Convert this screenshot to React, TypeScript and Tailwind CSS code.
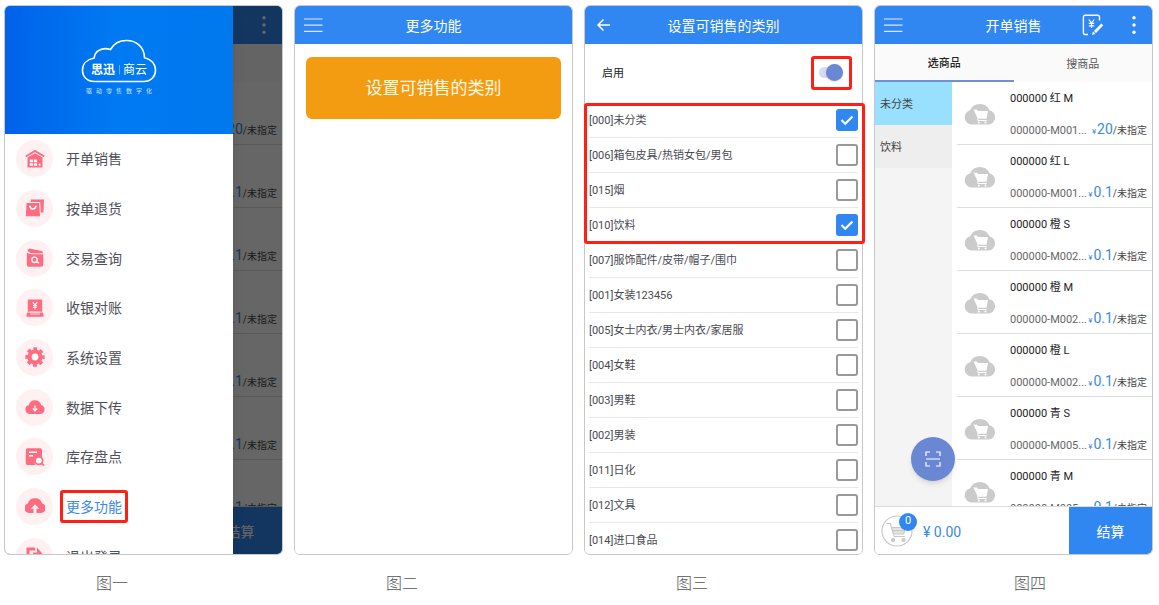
import React from "react";

interface MenuItem {
  id: string;
  label: string;
  active?: boolean;
}

interface Category {
  code: string;
  name: string;
  checked?: boolean;
}

interface Product {
  id: number;
  name: string;
  code: string;
  price: string;
}

const menuItems: MenuItem[] = [
  { id: "sale", label: "开单销售" },
  { id: "return", label: "按单退货" },
  { id: "query", label: "交易查询" },
  { id: "cashier", label: "收银对账" },
  { id: "settings", label: "系统设置" },
  { id: "download", label: "数据下传" },
  { id: "stock", label: "库存盘点" },
  { id: "more", label: "更多功能", active: true },
  { id: "logout", label: "退出登录" },
];

const categories: Category[] = [
  { code: "000", name: "未分类", checked: true },
  { code: "006", name: "箱包皮具/热销女包/男包" },
  { code: "015", name: "烟" },
  { code: "010", name: "饮料", checked: true },
  { code: "007", name: "服饰配件/皮带/帽子/围巾" },
  { code: "001", name: "女装123456" },
  { code: "005", name: "女士内衣/男士内衣/家居服" },
  { code: "004", name: "女鞋" },
  { code: "003", name: "男鞋" },
  { code: "002", name: "男装" },
  { code: "011", name: "日化" },
  { code: "012", name: "文具" },
  { code: "014", name: "进口食品" },
];

const products: Product[] = [
  { id: 1, name: "000000 红 M", code: "000000-M001...", price: "20" },
  { id: 2, name: "000000 红 L", code: "000000-M001...", price: "0.1" },
  { id: 3, name: "000000 橙 S", code: "000000-M002...", price: "0.1" },
  { id: 4, name: "000000 橙 M", code: "000000-M002...", price: "0.1" },
  { id: 5, name: "000000 橙 L", code: "000000-M002...", price: "0.1" },
  { id: 6, name: "000000 青 S", code: "000000-M005...", price: "0.1" },
  { id: 7, name: "000000 青 M", code: "000000-M005...", price: "0.1" },
];

const menuIcons: Record<string, React.ReactNode> = {
  sale: (
    <>
      <path d="M.8 7.600 10 1.900l9.200 5.700" fill="none" stroke="#ff6b80" strokeWidth="1.800" />
      <path d="M2.500 8.600 10 4.200l7.500 4.400v9.900h-15z" fill="#ff6b80" />
      <path
        d="M4.800 10.500h3.100v2.700H4.800zM8.900 10.500H12v2.700H8.900zM4.800 14.200h3.100v2.600H4.800zM8.900 14.200H12v2.600H8.900zM13.700 14.600h1.700v2.200h-1.700z"
        fill="#fff"
      />
    </>
  ),
  return: (
    <>
      <path d="M5.800 1.500H19l-.6 13h-2.600L15.200 4H5.600z" fill="#ff6b80" />
      <path d="M1.500 5h12.700l.8 13.300H.8z" fill="#ff6b80" />
      <path d="M4.900 7.800c.3 4.300 5.700 4.300 6 0" fill="none" stroke="#fff" strokeWidth="1.600" />
    </>
  ),
  query: (
    <>
      <path d="M4.500.5 16.500 3q1.600.4 1.600 2.200H7Q3 4.500 2.500 2z" fill="#ff6b80" />
      <path d="M1.800 4.500q2 1.700 5.200 1.700h11.200v10.500q0 2.100-2.100 2.100H3.900q-2.100 0-2.100-2.100z" fill="#ff6b80" />
      <circle cx="9.500" cy="11.800" r="2.700" fill="none" stroke="#fff" strokeWidth="1.400" />
      <path d="m11.500 13.800 2.500 1.200" stroke="#fff" strokeWidth="1.400" />
    </>
  ),
  cashier: (
    <>
      <path d="M2.800 1.600h14.400v12.200H2.800zM2.500 14.500h15l1 1.800v2.400h-17v-2.400z" fill="#ff6b80" />
      <path d="M7.800 4.200 10 7l2.200-2.800M10 7v4.200M8 7.500h4M8 9.300h4" fill="none" stroke="#fff" strokeWidth="1.100" />
      <path d="M4.800 14h10.400M5 16h10" stroke="#fff" strokeWidth=".8" />
    </>
  ),
  settings: (
    <>
      <circle cx="10" cy="10" r="7.600" fill="#ff6b80" />
      <circle
        cx="10"
        cy="10"
        r="8.300"
        fill="none"
        stroke="#ff6b80"
        strokeWidth="2.800"
        strokeDasharray="3.800 2.719"
        strokeDashoffset="1.900"
      />
      <circle cx="10" cy="10" r="3.400" fill="#fff" />
    </>
  ),
  download: (
    <>
      <path
        d="M4.500 17a4.600 4.600 0 0 1-.7-9 6.400 6.400 0 0 1 12.400 0 4.600 4.600 0 0 1-.7 9z"
        fill="#ff6b80"
      />
      <path d="M10 8.500v5M7.800 11.500 10 13.800l2.200-2.300" fill="none" stroke="#fff" strokeWidth="1.200" />
    </>
  ),
  stock: (
    <>
      <path
        d="M2.500 1.200h12.800q1.700 0 1.700 1.700V10a5.500 5.500 0 0 0-6.500 8H2.500q-1.700 0-1.700-1.700V2.900q0-1.700 1.700-1.700z"
        fill="#ff6b80"
      />
      <path d="M4 5.200h8M4 8.800h4" stroke="#fff" strokeWidth="1.400" />
      <circle cx="13.800" cy="13.600" r="3.800" fill="#fff" stroke="#ff6b80" strokeWidth="1.700" />
      <path d="m16.400 16.200 2.500 2.500" stroke="#ff6b80" strokeWidth="1.900" />
    </>
  ),
  more: (
    <path
      d="M8.500 17H4a4.800 4.800 0 0 1-1.200-9.400 7.500 7.500 0 0 1 14.400 0A4.800 4.800 0 0 1 16 17h-4.500v-4.200h2.700L10 8.200l-4.200 4.600h2.700z"
      fill="#ff6b80"
    />
  ),
  logout: (
    <>
      <path d="M10 3H3v14h7" fill="none" stroke="#ff6b80" strokeWidth="3" />
      <path d="m12 1.500 7 8-7 8V12H8V6.500h4z" fill="#ff6b80" />
    </>
  ),
};

const Burger = () => (
  <button type="button" aria-label="菜单" className="w-5">
    <svg className="h-5 w-5" viewBox="0 0 20 20" stroke="#d9eaff" strokeWidth="1.200">
      <path d="M1 4h18.500M1 10.200h18.500M1 16.300h18.500" />
    </svg>
  </button>
);

const TopBar = ({
  title,
  left,
  right,
}: {
  title: string;
  left: React.ReactNode;
  right?: React.ReactNode;
}) => (
  <header className="grid h-[38px] shrink-0 grid-cols-[1fr_auto_1fr] items-center bg-[#3087f2] px-2 text-white">
    <div className="flex">{left}</div>
    <h2 className="pt-0.5 text-sm">{title}</h2>
    <div className="flex items-center justify-end">{right}</div>
  </header>
);

const CloudCart = () => (
  <svg className="mt-5 h-[23px] w-8 shrink-0" viewBox="0 0 32 23">
    <path
      d="M7.500 22.500a7.200 7.200 0 0 1-1.300-14.200A10.500 10.500 0 0 1 25.500 8.300a7.200 7.200 0 0 1-1 14.200z"
      fill="#cbcbcb"
    />
    <path d="M9.500 7.500h3.200L14 9h10l-1.500 7.700h-8.700z" fill="#fff" />
    <path d="M13.800 16.500v2h9" fill="none" stroke="#fff" strokeWidth="1" />
    <circle cx="14.800" cy="20.500" r="1" fill="#fff" />
    <circle cx="21.500" cy="20.500" r="1" fill="#fff" />
  </svg>
);

const SalesScreen = () => (
  <div className="relative flex h-full flex-col bg-white">
    <TopBar
      title="开单销售"
      left={<Burger />}
      right={
        <>
          <button type="button" aria-label="改价">
            <svg
              className="h-[22px] w-[22px]"
              viewBox="0 0 22 22"
              fill="none"
              stroke="#fff"
              strokeWidth="1.400"
            >
              <path d="M17.500 6.500V3q0-1.800-1.800-1.800H3.200Q1.400 1.200 1.400 3v16q0 1.500 1.500 1.500H6" />
              <path
                d="m6.800 5.500 2.700 3.500 2.700-3.500M9.500 9v5M6.800 9.300h5.400M6.800 11.800h5.400"
                strokeWidth="1.200"
              />
              <path d="m13 18 7.300-7.600" strokeWidth="2.800" />
              <path d="m10.500 20.500.7-2.600 1.900 1.700z" fill="#fff" strokeWidth=".8" />
            </svg>
          </button>
          <button type="button" aria-label="更多" className="ml-5">
            <svg className="h-5 w-5" viewBox="0 0 20 20" fill="#fff">
              <circle cx="10" cy="2.700" r="1.700" />
              <circle cx="10" cy="10" r="1.700" />
              <circle cx="10" cy="17.300" r="1.700" />
            </svg>
          </button>
        </>
      }
    />

    {/* Tabs */}
    <div className="grid h-[38px] shrink-0 grid-cols-2 bg-[#fafafa] text-[11px]">
      <button type="button" className="border-b-2 border-[#6f8fd8] pt-1 font-medium text-[#222]">
        选商品
      </button>
      <button type="button" className="pt-1 text-[#555]">
        搜商品
      </button>
    </div>

    <div className="flex min-h-0 flex-1">
      {/* Categories */}
      <nav className="w-[77px] shrink-0 bg-[#f4f4f4] text-[11px] text-[#444]">
        <button
          type="button"
          className="block h-[43px] w-full bg-[#99e0ff] px-[5px] pt-1 text-left"
        >
          未分类
        </button>
        <button
          type="button"
          className="block h-[43px] w-full bg-[#eeeeee] px-[5px] pt-1 text-left"
        >
          饮料
        </button>
      </nav>

      {/* Products */}
      <ul className="min-w-0 flex-1 overflow-hidden pl-[5px]">
        {products.map((product) => (
          <li
            key={product.id}
            className="flex h-[63px] gap-[13px] border-b border-[#dedede] pr-[5px] pl-[7px]"
          >
            <CloudCart />
            <div className="min-w-0 flex-1 pt-[9px] pl-px text-[11px] leading-4 whitespace-nowrap">
              <p className="text-[#222]">{product.name}</p>
              <div className="mt-[14px] flex items-baseline justify-between text-[#666]">
                <span>{product.code}</span>
                <span className="text-[10px] text-[#444]">
                  <span className="mr-px text-[8px] text-[#3b8ae0]">¥</span>
                  <span className="text-sm leading-4 text-[#3b8ae0]">{product.price}</span>
                  /未指定
                </span>
              </div>
            </div>
          </li>
        ))}
      </ul>
    </div>

    {/* Scan button */}
    <button
      type="button"
      aria-label="扫码"
      className="absolute bottom-[73px] left-9 flex h-11 w-11 items-center justify-center rounded-full bg-[#6a87d3] shadow-md"
    >
      <svg className="h-4 w-4" viewBox="0 0 16 16" fill="none" stroke="#fff" strokeWidth="1.200">
        <path d="M1 5V1h4M11 1h4v4M15 11v4h-4M5 15H1v-4M1 8h14" />
      </svg>
    </button>

    {/* Cart bar */}
    <footer className="flex h-12 shrink-0 items-center border-t border-[#dddddd] bg-white pl-[6px]">
      <div className="relative">
        <svg
          className="h-8 w-8"
          viewBox="0 0 32 32"
          fill="none"
          stroke="#c9c9c9"
          strokeWidth="1.200"
        >
          <circle cx="16" cy="16" r="15" />
          <path d="M5.500 8.500h3.800l4 13h10.500" />
          <path d="M10.500 12.500h14l-1.800 6.500H12.500z" fill="#e4e4e4" />
          <path d="M11.500 15.700h12" />
          <circle cx="12" cy="25" r="1.500" fill="#c9c9c9" />
          <circle cx="22.500" cy="25" r="1.500" fill="#c9c9c9" />
        </svg>
        <span className="absolute -top-[2px] -right-1 flex h-[18px] w-[18px] items-center justify-center rounded-full bg-[#3087f2] text-[11px] text-white">
          0
        </span>
      </div>
      <span className="ml-[10px] flex-1 pt-0.5 text-sm text-[#3b8ae0]">¥ 0.00</span>
      <button type="button" className="h-full w-[83px] bg-[#3087f2] pt-0.5 text-sm text-white">
        结算
      </button>
    </footer>
  </div>
);

const Logo = () => (
  <svg className="h-[45px] w-[76px]" viewBox="0 0 76 45">
    <path
      d="M13.500 42.500C6 42.500 1.500 37.500 1.500 31.200 1.500 25 6 20.300 13.200 19c.3-6.500 7.500-11.300 16.300-8.500C32.500 5 38.500 1.500 45.500 1.500c10 0 17.800 6.800 18 17.200 6.500 1.300 11 6 11 12.500 0 6.300-4.500 11.300-12 11.300z"
      fill="none"
      stroke="#fff"
      strokeWidth="1.600"
    />
    <path d="M38.500 26v9.500" stroke="#8fc4ff" strokeWidth=".7" />
    <text x="10" y="35" fill="#fff" fontSize="12" fontWeight="700">
      思迅
    </text>
    <text x="42" y="35" fill="#fff" fontSize="12">
      商云
    </text>
  </svg>
);

const DrawerScreen = () => (
  <div className="relative h-full">
    <SalesScreen />
    <div className="absolute inset-0 bg-black/60" />
    <aside className="absolute inset-y-0 left-0 w-[228px] overflow-hidden bg-white shadow-lg">
      <div className="flex h-32 flex-col items-center bg-linear-to-r from-[#0062ea] via-[#007af2] to-[#0078ee] pt-[33px]">
        <Logo />
        <p className="mt-[3px] flex gap-1 text-[6px] leading-[8px] text-[#cfe6ff]">
          {"驱动零售数字化".split("").map((char) => (
            <span key={char}>{char}</span>
          ))}
        </p>
      </div>
      <ul className="grid h-[447px] grid-rows-9">
        {menuItems.map((item) => (
          <li key={item.id} className="flex">
            <a href={`#${item.id}`} className="flex flex-1 items-center gap-[13px] pl-[11px]">
              <span className="flex h-[37px] w-[37px] items-center justify-center rounded-full bg-[#fff1f2]">
                <svg className="h-5 w-5" viewBox="0 0 20 20">
                  {menuIcons[item.id]}
                </svg>
              </span>
              {item.active ? (
                <span className="relative pt-px text-sm text-[#3b8ae0]">
                  {item.label}
                  <span className="absolute -inset-x-[6px] -inset-y-[6px] rounded-[3px] border-[3px] border-[#ff2015]" />
                </span>
              ) : (
                <span className="pt-px text-sm text-[#50505a]">{item.label}</span>
              )}
            </a>
          </li>
        ))}
      </ul>
    </aside>
  </div>
);

const MoreScreen = () => (
  <div className="h-full bg-white">
    <TopBar title="更多功能" left={<Burger />} />
    <div className="px-[11px] pt-[13px]">
      <button
        type="button"
        className="h-[62px] w-full rounded-md bg-[#f39c12] pt-0.5 text-[17px] text-[#fff8e8]"
      >
        设置可销售的类别
      </button>
    </div>
  </div>
);

const CategoryScreen = () => (
  <div className="h-full bg-white">
    <TopBar
      title="设置可销售的类别"
      left={
        <button type="button" aria-label="返回" className="ml-[3px]">
          <svg
            className="h-4 w-4"
            viewBox="0 0 16 16"
            fill="none"
            stroke="#fff"
            strokeWidth="1.500"
          >
            <path d="M14 8H2.500M7.500 2.500 2 8l5.500 5.500" />
          </svg>
        </button>
      }
    />
    <div className="flex h-[59px] items-center justify-between pr-[10px] pb-0.5 pl-[17px] text-[11px] text-[#222]">
      <label htmlFor="enable" className="pt-1">
        启用
      </label>
      <span className="flex h-[34px] w-[41px] items-center justify-center rounded-[3px] border-[3px] border-[#ff2015] pr-0.5">
        <input
          id="enable"
          type="checkbox"
          role="switch"
          defaultChecked
          className="relative h-[11px] w-6 appearance-none rounded-full bg-[#d3dcf1] before:absolute before:-top-[3px] before:right-0 before:h-[17px] before:w-[17px] before:rounded-full before:bg-[#6a87d3] before:shadow-sm before:content-['']"
        />
      </span>
    </div>
    <ul className="px-1">
      {categories.map((category) => (
        <li
          key={category.code}
          className="flex h-[35px] items-center justify-between border-b border-[#e8e8e8] text-[11px] text-[#4a4a52]"
        >
          <label htmlFor={`category-${category.code}`} className="pt-[3px]">
            [{category.code}]{category.name}
          </label>
          <span className="relative h-[22px] w-[22px]">
            <input
              id={`category-${category.code}`}
              type="checkbox"
              defaultChecked={category.checked}
              className="peer block h-full w-full appearance-none rounded-[3px] border-2 border-[#999999] bg-white checked:border-[#3087f2] checked:bg-[#3087f2]"
            />
            <svg
              className="pointer-events-none absolute inset-0 hidden peer-checked:block"
              viewBox="0 0 22 22"
              fill="none"
              stroke="#fff"
              strokeWidth="2.200"
            >
              <path d="m5.500 11 3.700 3.700 7.300-7.200" />
            </svg>
          </span>
        </li>
      ))}
    </ul>
  </div>
);

const Phone = ({
  caption,
  captionClass = "pl-[92px]",
  overlay,
  children,
}: {
  caption: string;
  captionClass?: string;
  overlay?: React.ReactNode;
  children: React.ReactNode;
}) => (
  <figure className="min-w-0">
    <div className="relative">
      <div className="aspect-[279/550] overflow-hidden rounded-md border border-[#c8c8c8]">
        {children}
      </div>
      {overlay}
    </div>
    <figcaption className={`mt-[17px] text-base font-light text-[#555] ${captionClass}`}>
      {caption}
    </figcaption>
  </figure>
);

export default function App() {
  return (
    <main className="grid grid-cols-4 gap-[11px] bg-white pt-[5px] pr-[6px] pl-1 font-[Roboto,'Noto_Sans_CJK_SC',sans-serif]">
      <Phone caption="图一">
        <DrawerScreen />
      </Phone>
      <Phone caption="图二">
        <MoreScreen />
      </Phone>
      <Phone
        caption="图三"
        overlay={
          <div className="pointer-events-none absolute top-[98px] -right-[2px] left-0 h-[141px] rounded-[3px] border-[3px] border-[#ff2015]" />
        }
      >
        <CategoryScreen />
      </Phone>
      <Phone caption="图四" captionClass="pl-[140px]">
        <SalesScreen />
      </Phone>
    </main>
  );
}
